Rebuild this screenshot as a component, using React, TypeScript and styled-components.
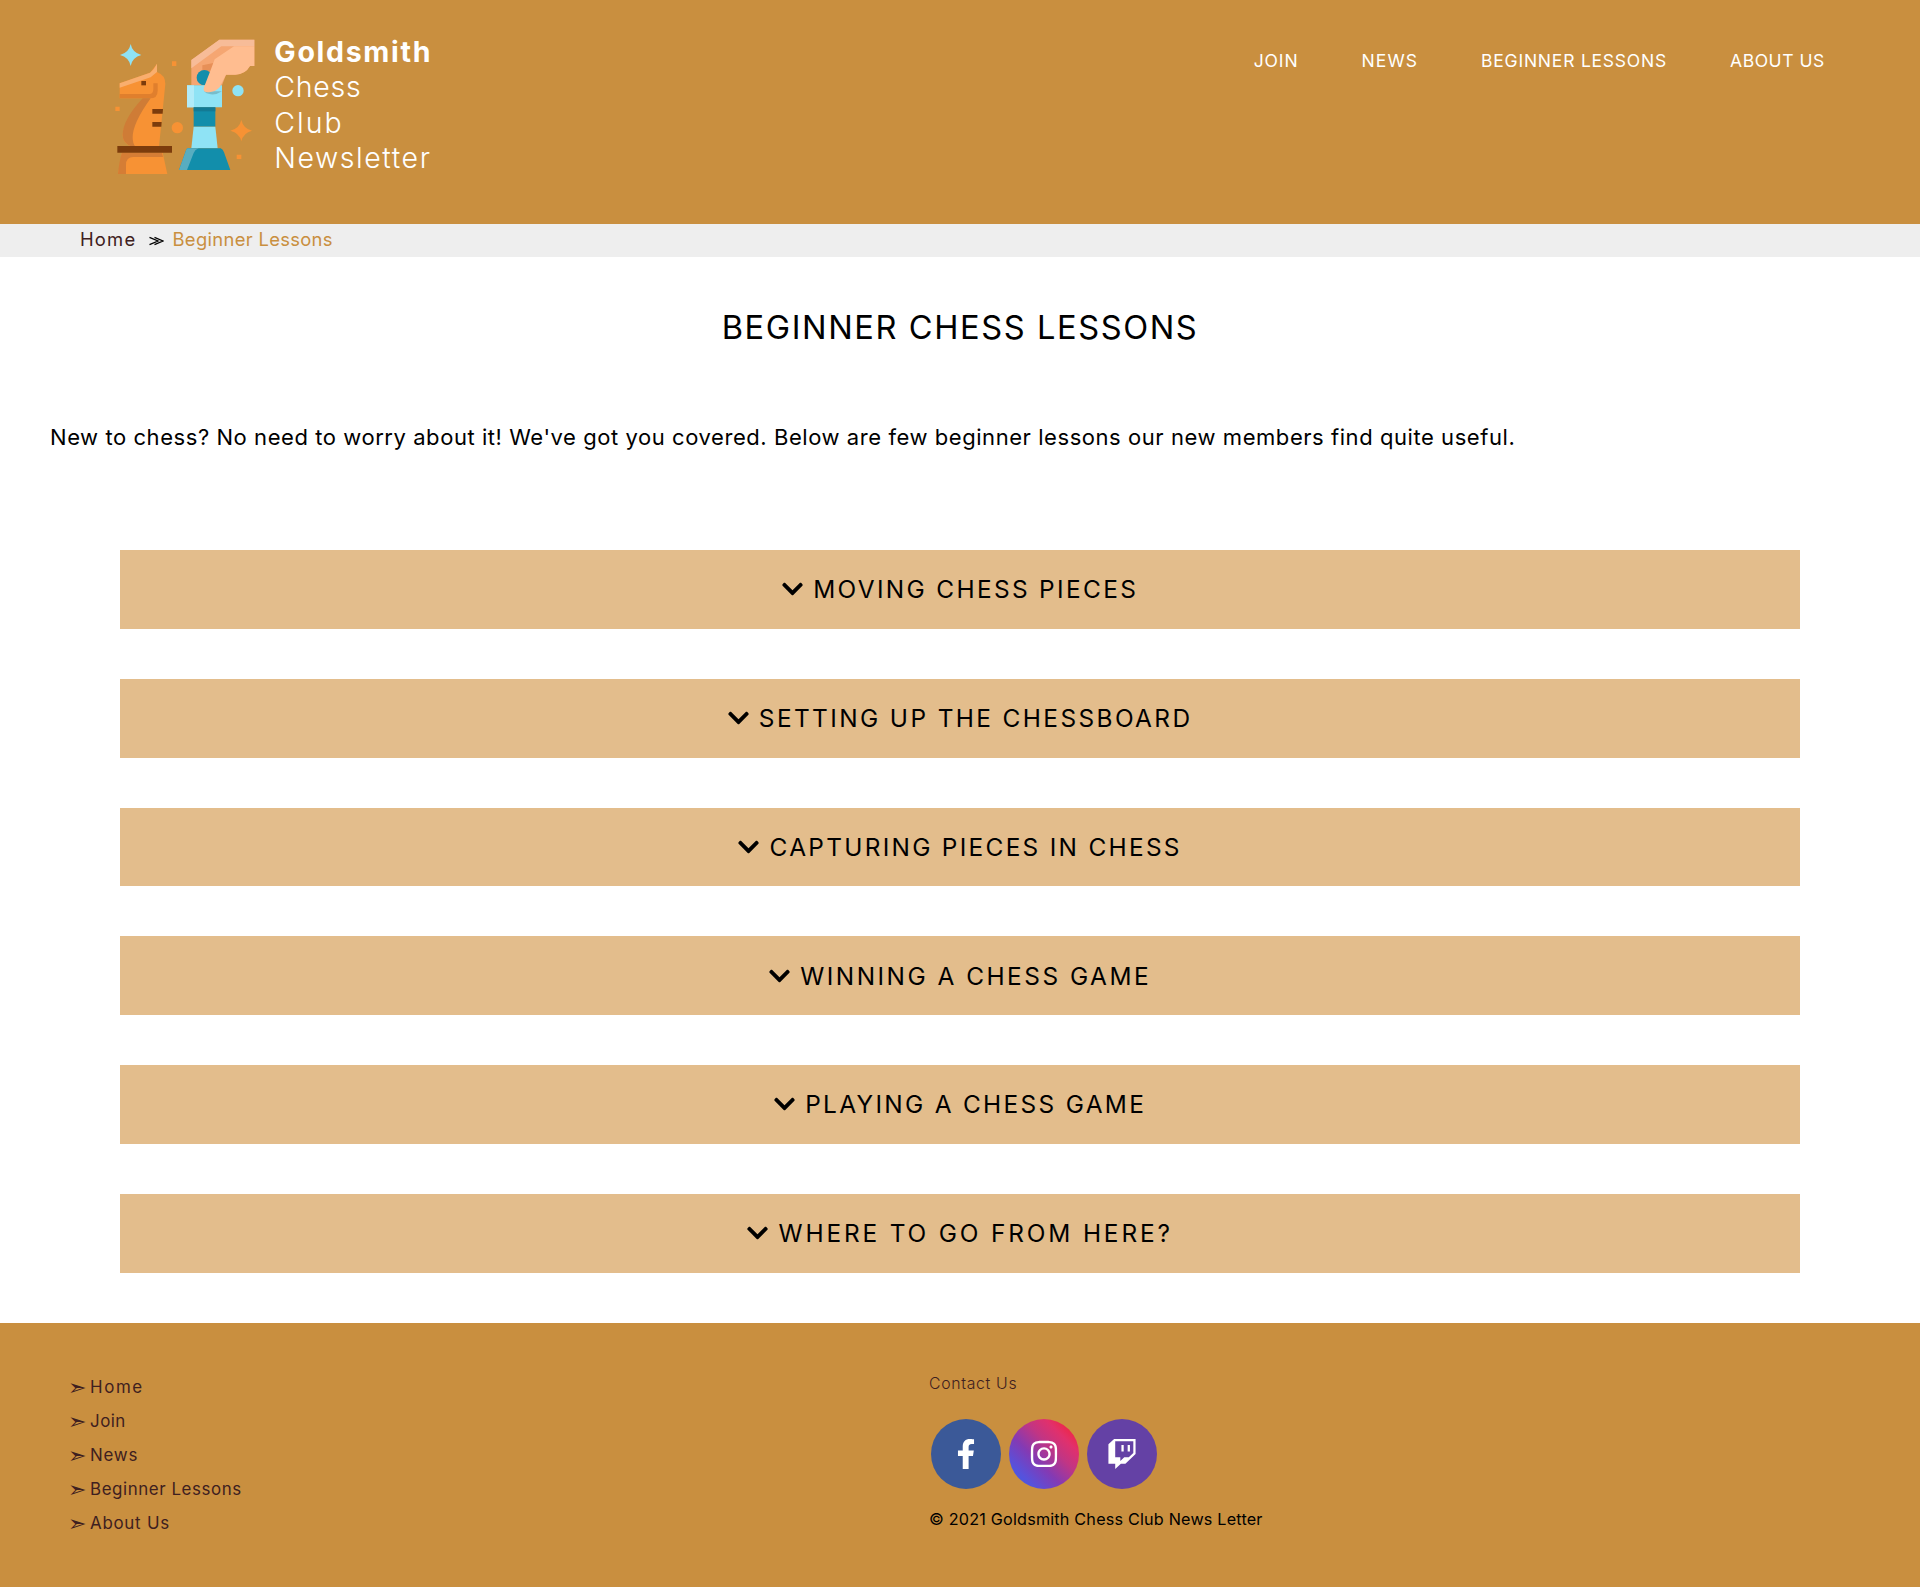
import React from "react";
import styled, { createGlobalStyle } from "styled-components";
import { FaChevronDown, FaFacebookF, FaInstagram, FaTwitch } from "react-icons/fa";

const gold = "#c98f3f";
const brown = "#3e2020";

const GlobalStyle = createGlobalStyle`
  *, *::before, *::after { box-sizing: border-box; }
  body { margin: 0; background: #fff; color: #000; font-family: Inter, "Open Sans", sans-serif; }
  h1, h2, p, ul { margin: 0; padding: 0; font-weight: 400; }
  a { color: inherit; text-decoration: none; }
`;

const Header = styled.header`
  display: flex;
  justify-content: space-between;
  align-items: flex-start;
  height: 224px;
  padding: 30px 95.2px 0 110px;
  background: ${gold};
  color: #fff;
`;

const Brand = styled.a`
  display: flex;
  gap: 14.3px;
`;

const LogoArt = styled.svg`
  display: block;
  width: 150px;
  height: 150px;
`;

const BrandName = styled.div`
  display: flex;
  flex-direction: column;
  padding-top: 4.1px;
`;

const BrandLine = styled.span<{ $track: number; $bold?: boolean }>`
  font-size: 28.5px;
  line-height: 35.3px;
  font-weight: ${(p) => (p.$bold ? 700 : 300)};
  letter-spacing: ${(p) => p.$track}px;
  white-space: nowrap;
`;

const Nav = styled.nav`
  display: flex;
  gap: 63px;
  padding-top: 21px;
`;

const NavLink = styled.a<{ $track: number }>`
  font-size: 17.5px;
  line-height: 20px;
  letter-spacing: ${(p) => p.$track}px;
  white-space: nowrap;
`;

const Breadcrumb = styled.nav`
  display: flex;
  align-items: center;
  height: 33px;
  padding: 0 80px 3px;
  background: #eee;
  font-size: 18.4px;
`;

const Crumb = styled.a<{ $track: number; $current?: boolean }>`
  color: ${(p) => (p.$current ? gold : brown)};
  letter-spacing: ${(p) => p.$track}px;
`;

const CrumbArrow = styled.svg`
  width: 15px;
  height: 10px;
  margin: 4px 8.4px 0 12.8px;
`;

const Title = styled.h1`
  padding-top: 49.5px;
  text-align: center;
  font-size: 32.6px;
  line-height: 40px;
  letter-spacing: 1.6px;
`;

const Intro = styled.p`
  margin-top: 75.5px;
  padding: 0 50px;
  font-size: 22px;
  line-height: 30px;
  letter-spacing: 0.56px;
`;

const Lessons = styled.section`
  display: flex;
  flex-direction: column;
  gap: 50px;
  padding: 98px 120px 50px;
`;

const Lesson = styled.button<{ $track: number }>`
  display: flex;
  justify-content: center;
  align-items: center;
  gap: 10.3px;
  height: 78.83px;
  padding: 0 0 0.6px;
  border: 0;
  background: #e3bd8c;
  color: #000;
  font: 400 24.4px Inter, sans-serif;
  letter-spacing: ${(p) => p.$track}px;
  cursor: pointer;

  svg { width: 21px; height: 24px; }
`;

const Footer = styled.footer`
  display: grid;
  grid-template-columns: 859px 1fr;
  height: 264px;
  padding: 47px 70px 0;
  background: ${gold};
`;

const LinkList = styled.ul`
  list-style: none;
  color: ${brown};
`;

const LinkItem = styled.li<{ $track: number }>`
  display: flex;
  height: 34px;
  font-size: 16.9px;
  line-height: 34px;
  letter-spacing: ${(p) => p.$track}px;
`;

const Bullet = styled.span`
  width: 22.5px;
  margin-left: -2.5px;
  font-family: "Noto Sans", sans-serif;
  font-size: 21.5px;
  letter-spacing: 0;
`;

const Contact = styled.section`
  display: flex;
  flex-direction: column;
  padding-top: 4.5px;
`;

const ContactTitle = styled.h2`
  color: ${brown};
  font-size: 15.8px;
  font-weight: 300;
  line-height: 20px;
  letter-spacing: 0.68px;
`;

const Socials = styled.div`
  display: flex;
  gap: 8px;
  padding: 24.5px 0 20px 2px;
`;

const Social = styled.a<{ $fill: string }>`
  display: flex;
  justify-content: center;
  align-items: center;
  width: 70px;
  height: 70px;
  border-radius: 50%;
  background: ${(p) => p.$fill};
  color: #fff;
  font-size: 30px;
`;

const Copyright = styled.p`
  font-size: 16.2px;
  line-height: 20px;
  letter-spacing: 0.19px;
`;

const ChessLogo = () => (
  <LogoArt viewBox="60 30 450 450" aria-hidden="true">
    {/* sparkles */}
    <path d="M122 72 Q127 98 154 105 Q127 112 122 138 Q117 112 90 105 Q117 98 122 72Z" fill="#8fe3f5" />
    <path d="M454 300 Q460 326 486 332 Q460 338 454 364 Q448 338 421 332 Q448 326 454 300Z" fill="#f79234" />
    <circle cx="444" cy="212" r="17" fill="#8fe3f5" />
    <circle cx="262" cy="323" r="17" fill="#f79234" />
    <path d="M246 124h13v14h-13zM76 260h13v13H76zM440 404h14v13h-14z" fill="#f79234" />
    {/* knight */}
    <path d="M89 190 L180 158 L201 131 L201 156 Q226 165 226 192 L207 380 H126 Q98 370 98 345 Q98 300 180 235 H89Z" fill="#f79234" />
    <path d="M89 190 L180 158 Q192 149 201 131 V156 L182 172 L89 203Z" fill="#f9ae6e" />
    <path d="M89 222H178Q190 222 190 208V190H203V212Q203 235 180 235H89Z" fill="#e07f2d" />
    <path d="M158 235H182Q128 310 128 352Q128 370 136 380H126Q98 370 98 345Q98 300 158 235Z" fill="#cf7c36" />
    <path d="M154 183h14v13h-14z" fill="#7c3c0c" />
    <path d="M187 267h32l-1 14h-31zM187 306h28l-1 14h-27z" fill="#7c3c0c" />
    <path d="M96 398H218L232 462H84Z" fill="#f79234" />
    <path d="M96 398H216L219 411H130Q108 411 108 435V462H84Q88 420 96 398Z" fill="#d57d35" />
    <path d="M82 378h164v20H82z" fill="#7c3c0c" />
    {/* hand and rook */}
    <path d="M304 120L388 59H493V138H480Q465 164 436 164H408L396 196H304Z" fill="#f5a672" />
    <path d="M304 120L388 59H493V79H394L304 145Z" fill="#f7bc98" />
    <path d="M337 136L370 129V196H337Z" fill="#e79058" />
    <circle cx="343" cy="173" r="23" fill="#128eab" />
    <path d="M291 196H396V262H291Z" fill="#8fe3f5" />
    <path d="M291 196H312V262H291Z" fill="#b1ebf8" />
    <path d="M342 214H396Q380 225 362 223Q348 221 342 214Z" fill="#78bdca" />
    <path d="M432 79H493V138H480Q465 164 436 164H408L389 202Q372 220 348 216Q338 214 342 202L364 145L374 118Z" fill="#ffbd90" />
    <path d="M311 262H376V320H311Z" fill="#128eab" />
    <path d="M311 262H376V274H311Z" fill="#137a94" />
    <path d="M311 320H376L383 385H304Z" fill="#8fe3f5" />
    <path d="M292 385H392Q399 388 402 397L421 450H267L286 397Q288 388 292 385Z" fill="#128eab" />
    <path d="M292 385H326Q315 389 311 399L291 450H267L286 397Q288 388 292 385Z" fill="#58adc0" />
  </LogoArt>
);

const brandLines = [
  { text: "Goldsmith", track: 1.7, bold: true },
  { text: "Chess", track: 0.75 },
  { text: "Club", track: 2 },
  { text: "Newsletter", track: 1.55 },
];

const navLinks = [
  { text: "JOIN", track: 0.9 },
  { text: "NEWS", track: 1.1 },
  { text: "BEGINNER LESSONS", track: 0.78 },
  { text: "ABOUT US", track: 0.55 },
];

const lessons = [
  { text: "MOVING CHESS PIECES", track: 2.35 },
  { text: "SETTING UP THE CHESSBOARD", track: 2.4 },
  { text: "CAPTURING PIECES IN CHESS", track: 2.3 },
  { text: "WINNING A CHESS GAME", track: 2.5 },
  { text: "PLAYING A CHESS GAME", track: 2.32 },
  { text: "WHERE TO GO FROM HERE?", track: 2.85 },
];

const footerLinks = [
  { text: "Home", track: 1.6 },
  { text: "Join", track: 0.5 },
  { text: "News", track: 0.8 },
  { text: "Beginner Lessons", track: 0.58 },
  { text: "About Us", track: 0.75 },
];

const instagramFill =
  "linear-gradient(to right top, #405de6 8%, #5851db 20%, #833ab4 40%, #c13584 60%, #e1306c 76%, #fd1d1d 100%)";

export default function App() {
  return (
    <>
      <GlobalStyle />
      <Header>
        <Brand href="#">
          <ChessLogo />
          <BrandName>
            {brandLines.map((l) => (
              <BrandLine key={l.text} $track={l.track} $bold={l.bold}>{l.text}</BrandLine>
            ))}
          </BrandName>
        </Brand>
        <Nav>
          {navLinks.map((l) => (
            <NavLink key={l.text} href="#" $track={l.track}>{l.text}</NavLink>
          ))}
        </Nav>
      </Header>
      <Breadcrumb>
        <Crumb href="#" $track={1.2}>Home</Crumb>
        <CrumbArrow viewBox="0 0 15 10" fill="none" stroke="#000" strokeWidth="1.3">
          <path d="M.5 1.4L9 5L.5 8.6M5.5 1.4L14 5L5.5 8.6" />
        </CrumbArrow>
        <Crumb href="#" $track={0.32} $current>Beginner Lessons</Crumb>
      </Breadcrumb>
      <main>
        <Title>BEGINNER CHESS LESSONS</Title>
        <Intro>
          New to chess? No need to worry about it! We've got you covered. Below are few beginner lessons our new
          members find quite useful.
        </Intro>
        <Lessons>
          {lessons.map((l) => (
            <Lesson key={l.text} $track={l.track}>
              <FaChevronDown />
              {l.text}
            </Lesson>
          ))}
        </Lessons>
      </main>
      <Footer>
        <LinkList>
          {footerLinks.map((l) => (
            <LinkItem key={l.text} $track={l.track}>
              <Bullet>➣</Bullet>
              <a href="#">{l.text}</a>
            </LinkItem>
          ))}
        </LinkList>
        <Contact>
          <ContactTitle>Contact Us</ContactTitle>
          <Socials>
            <Social href="#" $fill="#3b5998"><FaFacebookF /></Social>
            <Social href="#" $fill={instagramFill}><FaInstagram /></Social>
            <Social href="#" $fill="#6441a5"><FaTwitch /></Social>
          </Socials>
          <Copyright>© 2021 Goldsmith Chess Club News Letter</Copyright>
        </Contact>
      </Footer>
    </>
  );
}
